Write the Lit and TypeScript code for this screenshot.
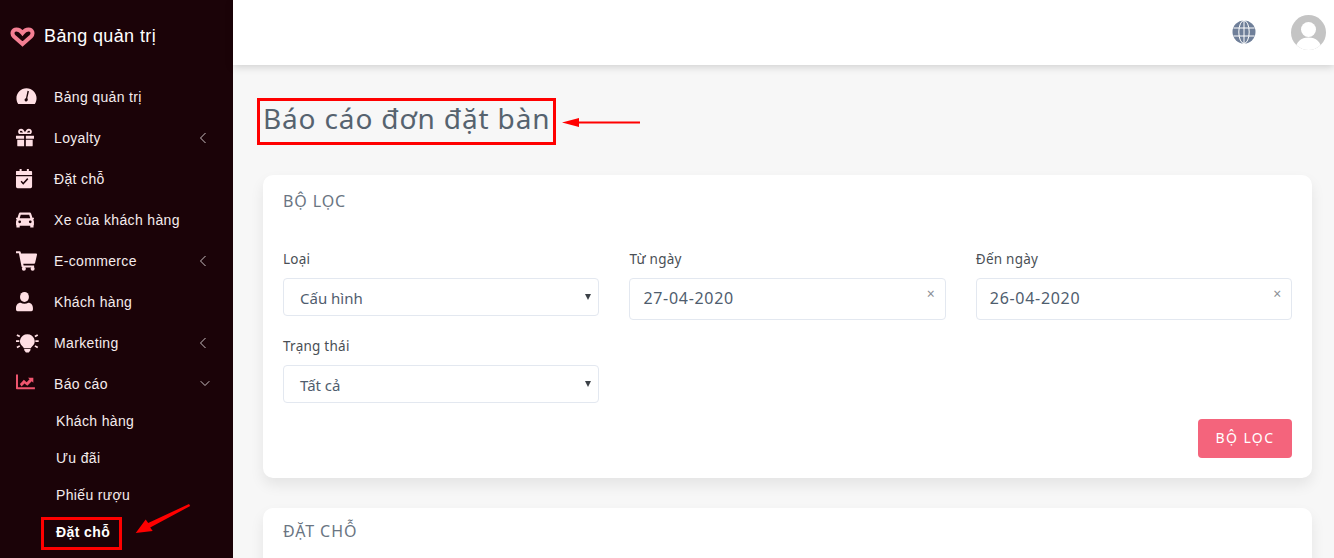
import { LitElement, html, css, svg } from "lit";
import { customElement } from "lit/decorators.js";

const ic = (c: string, inner: unknown, vb = "0 0 24 24") => html`<svg class="ic" viewBox=${vb} fill=${c}>${inner}</svg>`;
const P = "#ffdfe4";
const icons: Record<string, unknown> = {
  gauge: ic(P, svg`<path fill-rule="evenodd" d="M12 2.500C5.600 2.500.5 7.700.5 14c0 2.400.7 4.600 2 6.500h19c1.300-1.900 2-4.100 2-6.500 0-6.300-5.100-11.500-11.500-11.500zM14.800 6l-1.900 8.100c.7.700.8 1.800.2 2.700-.6.800-1.700 1-2.500.5-.8-.6-1-1.700-.5-2.500.3-.5.8-.8 1.300-.9L13.200 5.500z"/>`),
  gift: ic(P, svg`<g transform="translate(-1.500 0) scale(.98 1)"><path d="M1.500 10h9.500v3.500H1.500zM13 10h9.500v3.500H13zM3 14.500h8V22H4a1 1 0 0 1-1-1zM13 14.500h8V21a1 1 0 0 1-1 1h-7z"/><path fill-rule="evenodd" d="M7.500 2c2 0 3.500 2 4.500 4 1-2 2.500-4 4.500-4C18.500 2 20 3.400 20 5.200c0 1.200-.5 2.300-1.200 2.800H5.200C4.500 7.500 4 6.400 4 5.200 4 3.400 5.500 2 7.500 2zM7.500 4.200c-.8 0-1.300.5-1.300 1.100 0 .8.700 1 1.300 1h2.200C9 5 8.200 4.200 7.500 4.200zm9 0c-.7 0-1.500.8-2.200 2.100h2.200c.6 0 1.300-.2 1.300-1 0-.6-.5-1.100-1.300-1.100z"/></g>`),
  cal: ic(P, svg`<g transform="translate(-1.400 0) scale(.92 1)"><path d="M6 1h2.500v3H6zM15 1h2.500v3H15z"/><path fill-rule="evenodd" d="M3 3.500h17.500a1 1 0 0 1 1 1V8h-20V4.500a1 1 0 0 1 1.500-1zM1.500 9.500h20V21a2 2 0 0 1-2 2h-16a2 2 0 0 1-2-2zM16.800 12.800l-1.300-1.300-5 5-2-2-1.300 1.300 3.300 3.300z"/></g>`),
  car: ic(P, svg`<g transform="translate(-.9 0) scale(.93 1)"><path fill-rule="evenodd" d="M6.500 4h11c1 0 1.800.6 2.100 1.500L21.200 10H23v1.500l-1 .7c.6.500 1 1.200 1 2V18a1 1 0 0 1-.5.9V21h-4v-2h-13v2h-4v-2.100A1 1 0 0 1 1 18v-3.800c0-.8.400-1.500 1-2l-1-.7V10h1.800l1.600-4.500C4.700 4.600 5.500 4 6.500 4zM6.800 6.500 5.500 10.500h13l-1.300-4zM5.500 13a1.700 1.700 0 1 0 0 3.400 1.700 1.700 0 0 0 0-3.400zm13 0a1.700 1.700 0 1 0 0 3.400 1.700 1.700 0 0 0 0-3.400z"/></g>`),
  cart: ic(P, svg`<path d="M0 1.500h4.200c.6 0 1 .4 1.100.9L5.700 4H23c.7 0 1.200.6 1 1.300l-2.200 9.500c-.1.500-.6.900-1.100.9H8.300l.4 2h12v2.200H7.500c-.6 0-1-.4-1.100-.9L3.300 3.700H0z"/><circle cx="9" cy="21.500" r="2.300"/><circle cx="19" cy="21.500" r="2.300"/>`),
  user: ic(P, svg`<g transform="scale(.88 1)"><circle cx="11" cy="6.800" r="5.800"/><path d="M6 13.500c1.400.7 3.200 1 5 1s3.600-.3 5-1c3.500 0 6 2.500 6 6V21a2 2 0 0 1-2 2H2a2 2 0 0 1-2-2v-1.500c0-3.500 2.500-6 6-6z"/></g>`),
  bulb: ic(P, svg`<g transform="scale(1.080 1)"><path d="M12 2.500a8 8 0 0 0-5 14c.8.700 1.200 1.400 1.300 2.200h7.400c.1-.8.500-1.500 1.300-2.200a8 8 0 0 0-5-14zM8.700 19.500h6.600v1.300L13.500 23.500h-3L8.700 20.800z"/><path d="M0 9.500h3.500v2H0zM20.500 9.500H24v2h-3.500zM1.500 2.500l3 1.800-1 1.700-3-1.800zM22.500 2.500l-3 1.800 1 1.700 3-1.800zM3.500 15l1 1.700-3 1.800-1-1.700zM20.500 15l-1 1.700 3 1.800 1-1.700z"/></g>`),
  chart: ic("#f0566f", svg`<g transform="translate(0 .5) scale(.9 .86)"><path d="M0 1.500h2.500v17H24V21H1a1 1 0 0 1-1-1z"/><path d="M5 14 10 8.500l3.500 3.200 3.700-4-2-2H22v6.800l-2-2-5.600 6-3.600-3.200-3.800 4.200z"/></g>`),
};

@customElement("app-root")
export class AppRoot extends LitElement {
  static styles = css`
    :host { display: block; width: 1334px; height: 558px; overflow: hidden; position: relative; font-family: "Noto Sans", sans-serif; background: #f7f7f7; }
    .shell { display: flex; height: 558px; }
    .side { width: 233px; flex: none; background: #1b0308; color: #f5eced; font-family: "Liberation Sans", sans-serif; font-size: 14px; letter-spacing: .35px; overflow: hidden; }
    .brand { display: flex; align-items: center; gap: 9px; height: 24px; padding: 24px 0 0 10px; color: #fff; font-size: 18px; letter-spacing: .38px; margin-bottom: 28px; }
    .item { display: flex; align-items: center; height: 41px; padding-left: 16px; }
    .ic { width: 21px; height: 21px; flex: none; margin-right: 17px; overflow: visible; }
    .label { flex: 1; }
    .chev { width: 8px; height: 12px; margin-right: 26px; flex: none; }
    .chev.down { width: 10px; height: 7px; margin-right: 23px; }
    .subs { margin-top: -2px; }
    .sub { display: flex; align-items: center; height: 37px; padding-left: 56px; }
    .sub.on { font-weight: 700; color: #fff; letter-spacing: .4px; }
    .main { flex: 1; min-width: 0; display: flex; flex-direction: column; }
    .top { height: 65px; flex: none; background: #fff; box-shadow: 0 2px 8px rgba(0,0,0,.16); display: flex; align-items: center; justify-content: flex-end; gap: 35px; padding-right: 8px; z-index: 1; }
    .globe { width: 24px; height: 24px; margin-top: -1px; }
    .avatar { width: 35px; height: 35px; margin-top: -1px; }
    .content { padding: 34px 22px 0 30px; }
    h1 { margin: 0 0 38px; font-weight: 400; font-size: 28px; line-height: 38px; letter-spacing: .85px; color: #56636f; }
    .card { background: #fff; border-radius: 10px; box-shadow: 0 7px 14px rgba(0,0,0,.08); padding: 16px 20px 20px; margin-bottom: 30px; }
    .card h2 { margin: 0 0 39px; font-weight: 400; font-size: 16px; letter-spacing: .9px; line-height: 20px; color: #6a7582; }
    .card.second { padding-top: 13px; }
    .grid { display: grid; grid-template-columns: repeat(3, 316.4px); column-gap: 30px; row-gap: 17px; align-items: start; }
    label { display: block; font-size: 13.500px; letter-spacing: .25px; line-height: 18px; color: #4a4f55; margin-bottom: 10px; }
    .field { box-sizing: border-box; display: flex; align-items: center; justify-content: space-between; border: 1px solid #e3e8f0; border-radius: 4px; background: #fff; font-size: 15px; color: #4f5d6e; position: relative; }
    .sel { height: 38px; padding: 0 7px 0 16px; }
    .sel span { padding-top: 2px; }
    .sel i { width: 0; height: 0; border-left: 3px solid transparent; border-right: 3px solid transparent; border-top: 6px solid #3c4148; }
    .date { height: 42px; padding: 0 10px 0 13px; font-size: 16px; letter-spacing: .7px; }
    .date span { padding-bottom: 2px; }
    .date b { font-weight: 400; font-size: 14px; letter-spacing: 0; color: #8b8f95; align-self: flex-start; margin-top: 6px; line-height: 18px; padding: 0; }
    .actions { display: flex; justify-content: flex-end; margin-top: 16px; }
    button { width: 94px; height: 39px; border: 0; border-radius: 4px; background: #f4647c; color: #fff; font: 400 14px "Noto Sans", sans-serif; letter-spacing: 1.400px; padding: 0 0 2px; }
    .ann { position: absolute; box-sizing: border-box; border: 3px solid #f00; }
    .arrows { position: absolute; left: 0; top: 0; width: 1334px; height: 558px; pointer-events: none; }
  `;

  row(icon: string, text: string, chev = "") {
    return html`<div class="item">${icons[icon]}<span class="label">${text}</span>
      ${chev === "l" ? html`<svg class="chev" viewBox="0 0 8 12" fill="none" stroke="#c9c0c2" stroke-width="1"><path d="M6.500 1 1.500 6l5 5"/></svg>` : ""}
      ${chev === "d" ? html`<svg class="chev down" viewBox="0 0 10 7" fill="none" stroke="#c9c0c2" stroke-width="1"><path d="M.7 1.200 5 5.500l4.300-4.300"/></svg>` : ""}</div>`;
  }

  render() {
    return html`
      <div class="shell">
        <nav class="side">
          <div class="brand">
            <svg width="25" height="21" viewBox="0 0 25 21" fill="none" stroke="#f47f93" stroke-width="4"><path d="M12.500 18 4 10.500C1.300 7.800 2.500 3.500 6.500 3.500c2.500 0 4.500 1.500 6 3.500 1.500-2 3.500-3.500 6-3.500 4 0 5.200 4.300 2.500 7z"/></svg>
            <span>Bảng quản trị</span>
          </div>
          ${this.row("gauge", "Bảng quản trị")}
          ${this.row("gift", "Loyalty", "l")}
          ${this.row("cal", "Đặt chỗ")}
          ${this.row("car", "Xe của khách hàng")}
          ${this.row("cart", "E-commerce", "l")}
          ${this.row("user", "Khách hàng")}
          ${this.row("bulb", "Marketing", "l")}
          ${this.row("chart", "Báo cáo", "d")}
          <div class="subs">
            <div class="sub">Khách hàng</div>
            <div class="sub">Ưu đãi</div>
            <div class="sub">Phiếu rượu</div>
            <div class="sub on">Đặt chỗ</div>
          </div>
        </nav>
        <div class="main">
          <header class="top">
            <svg class="globe" viewBox="0 0 24 24"><circle cx="12" cy="12" r="11.500" fill="#6f7f99"/><g fill="none" stroke="#fff" stroke-width="1"><ellipse cx="12" cy="12" rx="5.200" ry="11.500"/><path d="M12 .5v23M1.500 8h21M1.500 16h21"/></g></svg>
            <svg class="avatar" viewBox="0 0 35 35"><defs><clipPath id="av"><circle cx="17.500" cy="17.500" r="17.500"/></clipPath></defs><circle cx="17.500" cy="17.500" r="17.500" fill="#c4c4c4"/><g clip-path="url(#av)" fill="#fff"><circle cx="17.500" cy="14.500" r="7.500"/><path d="M4 35c1-8 6-12.500 13.500-12.500S30 27 31 35z"/></g></svg>
          </header>
          <main class="content">
            <h1>Báo cáo đơn đặt bàn</h1>
            <section class="card">
              <h2>BỘ LỌC</h2>
              <div class="grid">
                <div><label>Loại</label><div class="field sel"><span>Cấu hình</span><i></i></div></div>
                <div><label>Từ ngày</label><div class="field date"><span>27-04-2020</span><b>×</b></div></div>
                <div><label>Đến ngày</label><div class="field date"><span>26-04-2020</span><b>×</b></div></div>
                <div><label>Trạng thái</label><div class="field sel"><span>Tất cả</span><i></i></div></div>
              </div>
              <div class="actions"><button>BỘ LỌC</button></div>
            </section>
            <section class="card second"><h2>ĐẶT CHỖ</h2></section>
          </main>
        </div>
      </div>
      <div class="ann" style="left:257px;top:98px;width:299px;height:47px"></div>
      <div class="ann" style="left:41px;top:517px;width:81px;height:33px"></div>
      <svg class="arrows" viewBox="0 0 1334 558" fill="#f00" stroke="none">
        <path d="M640 121.500v2H578v-2z"/><path d="M562 122.500l17-4.500v9z"/>
        <path d="M189 504l1.200 2-40 21.500 2.500 3.500-17 2 10-13.500 2.500 3.500z"/>
      </svg>
    `;
  }
}
